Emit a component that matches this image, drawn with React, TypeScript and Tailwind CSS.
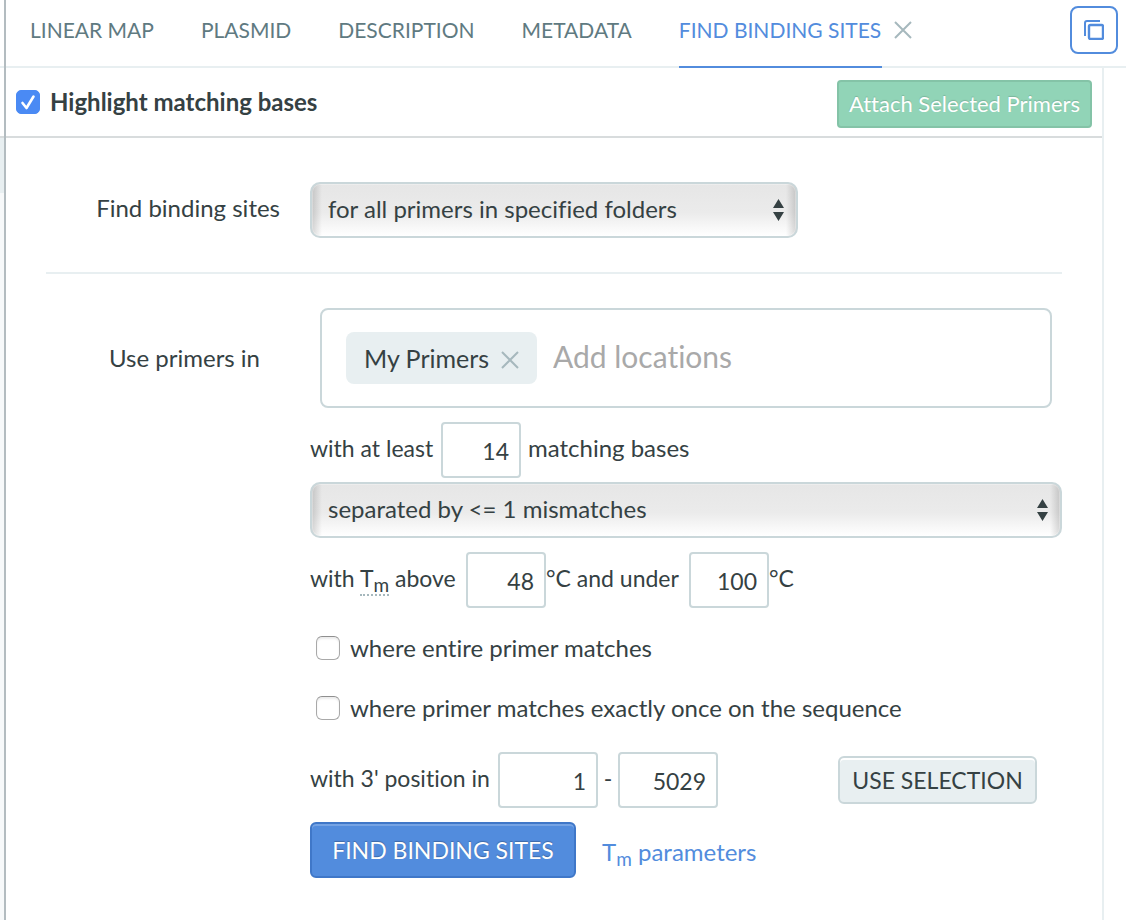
import { useState } from 'react'
import type { ReactNode, SelectHTMLAttributes, InputHTMLAttributes } from 'react'

const tabs = [
  { label: 'LINEAR MAP', width: 'min-w-[123px]' },
  { label: 'PLASMID', width: 'min-w-[90px]' },
  { label: 'DESCRIPTION', width: 'min-w-[136px]' },
  { label: 'METADATA', width: 'min-w-[109px]' },
]

function CloseIcon() {
  return (
    <svg width="18" height="18" viewBox="0 0 18 18" fill="none" stroke="#a6b8bd" strokeWidth="2" aria-hidden="true">
      <path d="M1 1l16 16M17 1L1 17" />
    </svg>
  )
}

function Select({ children, ...props }: SelectHTMLAttributes<HTMLSelectElement> & { children: ReactNode }) {
  return (
    <div className="relative">
      <select
        {...props}
        className="block w-full h-14 appearance-none rounded-[10px] border-2 border-[#cad7da] bg-[linear-gradient(to_right,rgba(0,0,0,0.15),transparent_10px,transparent_calc(100%-10px),rgba(0,0,0,0.15)),linear-gradient(#e6e6e6,#ebebeb_55%,#ffffff)] pl-4 pr-10 pb-0.5 shadow-[inset_0_0_0_1px_rgba(255,255,255,0.3)]"
      >
        {children}
      </select>
      <svg
        className="absolute right-3.5 top-4 pointer-events-none"
        width="11"
        height="24"
        viewBox="0 0 11 24"
        fill="#354143"
        aria-hidden="true"
      >
        <path d="M5.5 1L11 10H0zM5.5 23L11 14H0z" />
      </svg>
    </div>
  )
}

function NumberBox(props: InputHTMLAttributes<HTMLInputElement>) {
  return (
    <input
      type="text"
      inputMode="numeric"
      {...props}
      className={`h-14 shrink-0 rounded border-2 border-[#cad7da] bg-white pt-0.5 pr-2.5 text-right text-[23px] ${props.className ?? ''}`}
    />
  )
}

function Check({ label }: { label: string }) {
  return (
    <label className="flex h-[60px] items-center gap-2.5 pl-1.5">
      <input
        type="checkbox"
        className="size-6 shrink-0 appearance-none rounded-md border border-[#a9a9a9] border-t-[#8f8f8f] bg-white shadow-[inset_0_2px_2px_#ececec] checked:bg-[#4a8af4]"
      />
      {label}
    </label>
  )
}

export default function App() {
  const [highlight, setHighlight] = useState(true)
  const [minBases, setMinBases] = useState('14')
  const [tmAbove, setTmAbove] = useState('48')
  const [tmUnder, setTmUnder] = useState('100')
  const [start, setStart] = useState('1')
  const [end, setEnd] = useState('5029')

  return (
    <div className="flex min-h-screen bg-white font-['Lato',sans-serif] text-[24px] leading-7 text-[#354143] [font-variant-ligatures:none]">
      <div className="flex w-1 shrink-0 flex-col bg-[#f7f9fa]">
        <div className="h-[68px] border-b-2 border-[#e8eff1] bg-white" />
        <div className="h-[70px] border-b-2 border-[#d8dcdd] bg-white" />
        <div className="h-[55px] bg-[#e8eff1]" />
      </div>

      <div className="flex min-w-0 flex-1 flex-col border-l-2 border-[#b3bcc0]">
        <header className="flex h-[68px] justify-between border-b-2 border-[#e8eff1] pl-6 pr-2 text-[21px]">
          <nav className="flex gap-[47px] whitespace-nowrap text-[#5f7a81]">
            {tabs.map(t => (
              <a key={t.label} href="#" className={`h-[68px] pt-4 ${t.width}`}>
                {t.label}
              </a>
            ))}
            <div className="flex gap-3">
              <a href="#" aria-current="page" className="h-[68px] min-w-[203px] border-b-2 border-[#528cdd] pt-4 text-[#528cdd]">
                FIND BINDING SITES
              </a>
              <button type="button" aria-label="Close tab" className="h-[60px]">
                <CloseIcon />
              </button>
            </div>
          </nav>
          <button
            type="button"
            aria-label="Split view"
            className="mt-1.5 flex size-12 shrink-0 items-center justify-center rounded-lg border-2 border-[#528cdd]"
          >
            <svg width="20" height="20" viewBox="0 0 20 20" fill="none" stroke="#528cdd" aria-hidden="true">
              <rect x="5" y="5" width="14" height="14" rx="1.5" strokeWidth="2.4" />
              <path d="M1 16V3a2 2 0 0 1 2-2h13" strokeWidth="2" />
            </svg>
          </button>
        </header>

        <div className="flex flex-1">
          <main className="min-w-0 flex-1 border-r-2 border-[#e8eff1]">
            <div className="flex h-[70px] items-center justify-between border-b-2 border-[#d8dcdd] pl-2.5 pr-2.5 pt-1">
              <label className="flex items-center gap-2.5 pb-1 font-bold">
                <span className="relative flex size-6 items-center justify-center">
                  <input
                    type="checkbox"
                    checked={highlight}
                    onChange={e => setHighlight(e.target.checked)}
                    className="size-6 appearance-none rounded-[5px] border border-[#a9a9a9] checked:border-[#4a8af4] checked:bg-[#4a8af4]"
                  />
                  {highlight && (
                    <svg
                      className="absolute inset-0 pointer-events-none"
                      width="24"
                      height="24"
                      viewBox="0 0 24 24"
                      fill="none"
                      stroke="#fff"
                      strokeWidth="2.6"
                      strokeLinecap="round"
                      strokeLinejoin="round"
                      aria-hidden="true"
                    >
                      <path d="M6.500 13l4 5L17.500 6.500" />
                    </svg>
                  )}
                </span>
                Highlight matching bases
              </label>
              <button
                type="button"
                className="h-12 w-[255px] whitespace-nowrap rounded border-2 border-[#84c3a7] bg-[#91d4b7] text-[22px] text-white [text-shadow:0_-1px_1px_rgba(0,0,0,0.15)]"
              >
                Attach Selected Primers
              </button>
            </div>

            <form className="px-10 pt-11" onSubmit={e => e.preventDefault()}>
              <div className="grid grid-cols-[264px_1fr] border-b-2 border-[#e8eff1] pb-[34px]">
                <label htmlFor="mode" className="pr-[30px] pt-3 text-right">
                  Find binding sites
                </label>
                <div className="max-w-[488px]">
                  <Select id="mode">
                    <option>for all primers in specified folders</option>
                  </Select>
                </div>
              </div>

              <div className="grid grid-cols-[264px_1fr] pt-[34px]">
                <label htmlFor="locations" className="pr-[50px] pt-9 text-right">
                  Use primers in
                </label>
                <div className="min-w-0">
                  <div className="mx-2.5 flex h-[100px] items-center gap-4 rounded-lg border-2 border-[#cad7da] px-6">
                    <span className="flex h-[52px] w-[191px] shrink-0 items-center justify-between rounded-lg bg-[#e8eff1] px-[18px] text-[25px]">
                      My Primers
                      <button type="button" aria-label="Remove My Primers" className="pt-1">
                        <CloseIcon />
                      </button>
                    </span>
                    <input
                      id="locations"
                      placeholder="Add locations"
                      className="min-w-0 flex-1 pb-1 text-[30px] leading-9 outline-none placeholder:text-[#a9a9a9]"
                    />
                  </div>

                  <div className="mt-3.5 flex items-center whitespace-nowrap">
                    <label htmlFor="bases" className="w-[131px] pb-1 text-[23px]">with at least</label>
                    <NumberBox id="bases" className="w-20" value={minBases} onChange={e => setMinBases(e.target.value)} />
                    <span className="pb-1 pl-[7px]">matching bases</span>
                  </div>

                  <div className="mt-1">
                    <Select aria-label="Mismatches">
                      <option>separated by &lt;= 1 mismatches</option>
                    </Select>
                  </div>

                  <div className="mt-3.5 flex items-center whitespace-nowrap text-[23px]">
                    <label htmlFor="above" className="w-[156px] pb-1">
                      with <abbr className="border-b-2 border-dotted border-[#a6b8bd] pb-0.5 no-underline">T<sub className="text-[19px]">m</sub></abbr> above
                    </label>
                    <NumberBox id="above" className="w-20" value={tmAbove} onChange={e => setTmAbove(e.target.value)} />
                    <label htmlFor="under" className="w-[143px] pb-1">°C and under</label>
                    <NumberBox id="under" className="w-20" value={tmUnder} onChange={e => setTmUnder(e.target.value)} />
                    <span className="pb-1">°C</span>
                  </div>

                  <div className="mt-2.5 mb-3.5">
                    <Check label="where entire primer matches" />
                    <Check label="where primer matches exactly once on the sequence" />
                  </div>

                  <div className="flex items-center whitespace-nowrap text-[23px]">
                    <label htmlFor="start" className="w-[188px] pb-1">with 3' position in</label>
                    <NumberBox id="start" className="w-[100px]" value={start} onChange={e => setStart(e.target.value)} />
                    <span className="w-5 pb-1 text-center">-</span>
                    <NumberBox id="end" aria-label="End position" className="w-[100px]" value={end} onChange={e => setEnd(e.target.value)} />
                    <button
                      type="button"
                      className="ml-auto mr-[25px] h-12 w-[199px] rounded-md border-2 border-[#cad7da] bg-[#e8eff1] shadow-[inset_0_2px_0_#fff]"
                    >
                      USE SELECTION
                    </button>
                  </div>

                  <div className="mt-3.5 flex items-center gap-[26px] whitespace-nowrap">
                    <button
                      type="submit"
                      className="h-14 w-[266px] rounded-md border-2 border-[#3f77c8] bg-[#528cdd] text-[23px] text-white shadow-[inset_0_2px_0_#75a3e4] [text-shadow:0_-1px_1px_rgba(0,0,0,0.25)]"
                    >
                      FIND BINDING SITES
                    </button>
                    <a href="#" className="pt-1 text-[#528cdd]">
                      T<sub className="text-[19px]">m</sub> parameters
                    </a>
                  </div>
                </div>
              </div>
            </form>
          </main>
          <aside className="w-[22px] shrink-0" />
        </div>
      </div>
    </div>
  )
}
